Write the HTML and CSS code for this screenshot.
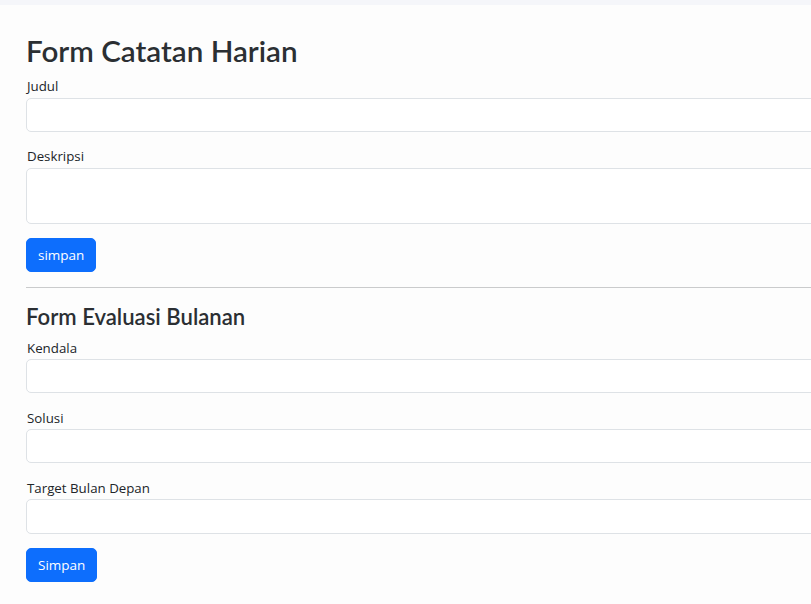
FILE: index.html
```html
<!DOCTYPE html>
<html lang="id">
<head>
<meta charset="utf-8">
<title>Form Catatan Harian</title>
<link rel="stylesheet" href="styles.css">
</head>
<body>
<div class="topbar"></div>
<main class="page">
  <h1 class="title">Form Catatan Harian</h1>
  <form class="form">
    <div class="field">
      <label class="label" for="judul">Judul</label>
      <input class="control" id="judul" type="text">
    </div>
    <div class="field">
      <label class="label" for="deskripsi">Deskripsi</label>
      <textarea class="control area" id="deskripsi" rows="2"></textarea>
    </div>
    <button class="btn" type="button">simpan</button>
  </form>
  <hr class="divider">
  <h2 class="subtitle">Form Evaluasi Bulanan</h2>
  <form class="form">
    <div class="field">
      <label class="label" for="kendala">Kendala</label>
      <input class="control" id="kendala" type="text">
    </div>
    <div class="field">
      <label class="label" for="solusi">Solusi</label>
      <input class="control" id="solusi" type="text">
    </div>
    <div class="field">
      <label class="label" for="target">Target Bulan Depan</label>
      <input class="control" id="target" type="text">
    </div>
    <button class="btn" type="button">Simpan</button>
  </form>
</main>
</body>
</html>
```
FILE: styles.css
```css
html, body {
  margin: 0;
  padding: 0;
  overflow: hidden;
}
body {
  background: #fdfdfd;
  color: #212529;
  font-family: "Open Sans", "Noto Sans", sans-serif;
  font-size: 14px;
  line-height: 1.5;
}
.topbar {
  height: 5px;
  background: #f5f6fa;
}
.page {
  padding: 28px 0 0 26px;
  overflow: hidden;
}
.title {
  margin: 0 0 7px;
  font-family: "Lato", "Open Sans", sans-serif;
  font-size: 29.6px;
  font-weight: 600;
  line-height: 36px;
  color: #2b2f33;
}
.subtitle {
  margin: 0 0 7px;
  font-family: "Lato", "Open Sans", sans-serif;
  font-size: 22.1px;
  font-weight: 600;
  line-height: 28px;
  color: #2b2f33;
}
.form {
  display: flex;
  flex-direction: column;
  align-items: flex-start;
  margin-right: -20px;
}
.field {
  display: flex;
  flex-direction: column;
  width: 100%;
  margin-bottom: 14.4px;
}
.label {
  font-size: 13.3px;
  line-height: 21.6px;
  padding-left: 1px;
}
.control {
  box-sizing: border-box;
  width: 100%;
  height: 34.2px;
  border: 1px solid #dee2e6;
  border-radius: 5px;
  background: #fff;
  font: inherit;
  padding: 5px 11px;
  margin: 0;
}
.area {
  height: 55.8px;
  resize: none;
}
.btn {
  box-sizing: border-box;
  height: 34.2px;
  padding: 0 11px;
  border: 1px solid #0d6efd;
  border-radius: 5px;
  background: #0d6efd;
  color: #fff;
  font-family: inherit;
  font-size: 13.5px;
}
.divider {
  margin: 15px -20px 14.4px 0;
  border: 0;
  border-top: 1px solid #cacbcc;
}
```
